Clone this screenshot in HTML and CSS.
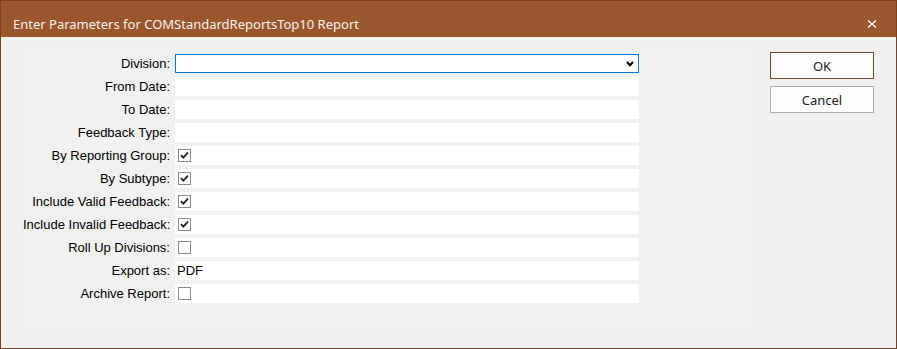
FILE: index.html
```html
<!DOCTYPE html>
<html>
<head>
<meta charset="utf-8">
<link rel="stylesheet" href="styles.css">
</head>
<body>
<div class="window">
  <div class="titlebar">
    <div class="title">Enter Parameters for COMStandardReportsTop10 Report</div>
    <svg class="close" width="10" height="10" viewBox="0 0 10 10"><path d="M1 1.5 L9 8.5 M9 1.5 L1 8.5" stroke="#fff" stroke-width="1.4" fill="none"/></svg>
  </div>
  <div class="content">
    <div class="panel">
      <div class="grid">
        <div class="label">Division:</div>
        <div class="select"><svg width="8" height="6" viewBox="0 0 8 6"><path d="M1 1 L4 4.2 L7 1" stroke="#000" stroke-width="2" fill="none"/></svg></div>

        <div class="label">From Date:</div>
        <div class="field"></div>

        <div class="label">To Date:</div>
        <div class="field"></div>

        <div class="label">Feedback Type:</div>
        <div class="field"></div>

        <div class="label">By Reporting Group:</div>
        <div class="field"><span class="cb"><svg width="11" height="11" viewBox="0 0 11 11"><path d="M2 5.2 L4.3 7.6 L9 2.6" stroke="#222" stroke-width="1.8" fill="none"/></svg></span></div>

        <div class="label">By Subtype:</div>
        <div class="field"><span class="cb"><svg width="11" height="11" viewBox="0 0 11 11"><path d="M2 5.2 L4.3 7.6 L9 2.6" stroke="#222" stroke-width="1.8" fill="none"/></svg></span></div>

        <div class="label">Include Valid Feedback:</div>
        <div class="field"><span class="cb"><svg width="11" height="11" viewBox="0 0 11 11"><path d="M2 5.2 L4.3 7.6 L9 2.6" stroke="#222" stroke-width="1.8" fill="none"/></svg></span></div>

        <div class="label">Include Invalid Feedback:</div>
        <div class="field"><span class="cb"><svg width="11" height="11" viewBox="0 0 11 11"><path d="M2 5.2 L4.3 7.6 L9 2.6" stroke="#222" stroke-width="1.8" fill="none"/></svg></span></div>

        <div class="label">Roll Up Divisions:</div>
        <div class="field"><span class="cb"></span></div>

        <div class="label">Export as:</div>
        <div class="field text">PDF</div>

        <div class="label">Archive Report:</div>
        <div class="field"><span class="cb"></span></div>
      </div>
    </div>
    <div class="buttons">
      <button class="btn default">OK</button>
      <button class="btn">Cancel</button>
    </div>
  </div>
</div>
</body>
</html>
```
FILE: styles.css
```css
html, body {
  margin: 0;
  padding: 0;
  background: #f0f0f0;
}
.window {
  width: 897px;
  height: 349px;
  box-sizing: border-box;
  border: 1px solid #7a431d;
  background: #f0f0f0;
  display: flex;
  flex-direction: column;
}
.titlebar {
  height: 36px;
  background: #9a572d;
  display: flex;
  align-items: flex-start;
  justify-content: space-between;
  flex-shrink: 0;
}
.title {
  font-family: "Noto Sans", sans-serif;
  font-size: 13px;
  line-height: 20px;
  color: #f7efe9;
  margin: 13px 0 0 12px;
}
.close {
  margin: 18px 19px 0 0;
}
.content {
  display: flex;
  align-items: flex-start;
  padding-top: 14px;
}
.panel {
  margin-left: 22px;
  width: 729px;
  height: 275px;
  box-sizing: border-box;
  padding-top: 3px;
  background: #f1f1f1;
}
.grid {
  display: grid;
  grid-template-columns: 147px 464px;
  column-gap: 5px;
  row-gap: 4px;
  grid-auto-rows: 19px;
}
.label {
  font-family: "Liberation Sans", Arial, sans-serif;
  font-size: 13px;
  line-height: 19px;
  color: #000;
  text-align: right;
  white-space: nowrap;
}
.field {
  background: #ffffff;
  display: flex;
  align-items: center;
}
.field.text {
  font-family: "Liberation Sans", Arial, sans-serif;
  font-size: 13px;
  line-height: 19px;
  padding-left: 2px;
  color: #000;
}
.select {
  background: #ffffff;
  border: 1px solid #0078d7;
  box-sizing: border-box;
  display: flex;
  align-items: center;
  justify-content: flex-end;
  padding-right: 4px;
}
.cb {
  width: 13px;
  height: 13px;
  box-sizing: border-box;
  border: 1px solid #8c8c8c;
  background: #fff;
  margin-left: 3px;
  display: flex;
  align-items: center;
  justify-content: center;
}
.cb svg {
  display: block;
}
.buttons {
  margin-left: 18px;
  margin-top: 1px;
  display: flex;
  flex-direction: column;
  gap: 7px;
}
.btn {
  width: 104px;
  height: 27px;
  box-sizing: border-box;
  border: 1px solid #adadad;
  background: #fdfdfd;
  font-family: "Noto Sans", sans-serif;
  font-size: 13px;
  color: #222;
  padding: 0;
  margin: 0;
  border-radius: 0;
}
.btn.default {
  border-color: #7a4a22;
}
```
